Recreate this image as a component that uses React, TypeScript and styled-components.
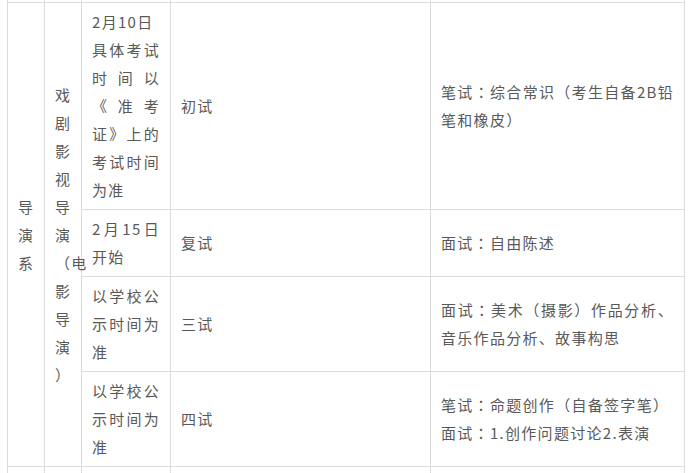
import styled, { createGlobalStyle } from 'styled-components'

const GlobalStyle = createGlobalStyle`
	html, body {
		margin: 0;
		padding: 0;
		background: #fff;
		overflow: hidden;
	}
`

const Page = styled.div`
	padding-left: 7px;
	height: 100vh;
	overflow: hidden;
	font-family: 'Noto Sans CJK SC', 'Noto Sans', sans-serif;
`

const Table = styled.table`
	border-collapse: collapse;
	table-layout: fixed;
	width: 677px;
	color: #595959;
	font-size: 15px;
	letter-spacing: 1.3px;
	line-height: 28px;
	text-spacing-trim: space-all;
	font-feature-settings: 'chws' 0, 'halt' 0, 'palt' 0;
`

const Cell = styled.td`
	border: 1px solid #dcdcdc;
	padding: 5px 10px;
	vertical-align: middle;
	text-align: justify;
	word-break: break-all;
`

const CutCell = styled.td`
	border: 1px solid #dcdcdc;
	border-top: none;
	padding: 0;
	height: 2px;
`

const NarrowCell = styled(Cell)`
	overflow: visible;
`

// centred full-width colon and brackets, as in the source page's font
const Punct = styled.span`
	font-family: 'Noto Sans CJK TC', 'Noto Sans CJK SC', sans-serif;
	text-spacing-trim: space-all;
	font-feature-settings: 'chws' 0, 'halt' 0;
`

const txt = (text: string) =>
	text
		.split(/([：（）])/)
		.map((part, i) => (i % 2 ? <Punct key={i}>{part}</Punct> : part))

type Stage = {
	date: React.ReactNode
	round: string
	content: React.ReactNode
}

const stages: Stage[] = [
	{
		date: (
			<>
				2月10日
				<br />
				具体考试时间以《准考证》上的考试时间为准
			</>
		),
		round: '初试',
		content: txt('笔试：综合常识（考生自备2B铅笔和橡皮）'),
	},
	{ date: '2月15日开始', round: '复试', content: txt('面试：自由陈述') },
	{
		date: '以学校公示时间为准',
		round: '三试',
		content: txt('面试：美术（摄影）作品分析、音乐作品分析、故事构思'),
	},
	{
		date: '以学校公示时间为准',
		round: '四试',
		content: (
			<>
				{txt('笔试：命题创作（自备签字笔）')}
				<br />
				{txt('面试：1.创作问题讨论2.表演')}
			</>
		),
	},
]

export default function App() {
	return (
		<Page>
			<GlobalStyle />
			<Table>
				<colgroup>
					<col style={{ width: 37 }} />
					<col style={{ width: 37 }} />
					<col style={{ width: 89 }} />
					<col style={{ width: 260 }} />
					<col style={{ width: 254 }} />
				</colgroup>
				<tbody>
					{/* tail of the previous row, scrolled off */}
					<tr>
						<CutCell />
						<CutCell />
						<CutCell />
						<CutCell />
						<CutCell />
					</tr>
					{stages.map((stage, i) => (
						<tr key={i}>
							{i === 0 && <NarrowCell rowSpan={4}>导演系</NarrowCell>}
							{i === 0 && (
								<NarrowCell rowSpan={4}>
									{txt('戏剧影视导演（电影导演')}
									<br />
									{txt('）')}
								</NarrowCell>
							)}
							<Cell>{stage.date}</Cell>
							<Cell>{stage.round}</Cell>
							<Cell>{stage.content}</Cell>
						</tr>
					))}
					<tr>
						<Cell>&nbsp;</Cell>
						<Cell>&nbsp;</Cell>
						<Cell>&nbsp;</Cell>
						<Cell>&nbsp;</Cell>
						<Cell>&nbsp;</Cell>
					</tr>
				</tbody>
			</Table>
		</Page>
	)
}
